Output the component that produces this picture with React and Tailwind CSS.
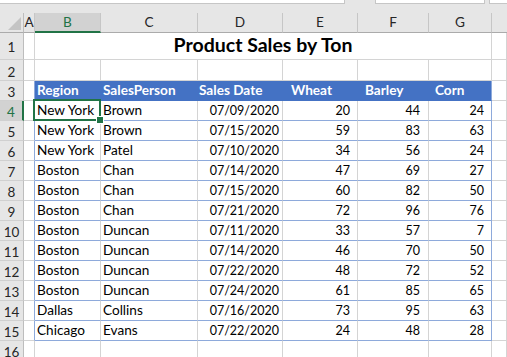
import React from "react";

const rows = [
  ["New York", "Brown", "07/09/2020", 20, 44, 24],
  ["New York", "Brown", "07/15/2020", 59, 83, 63],
  ["New York", "Patel", "07/10/2020", 34, 56, 24],
  ["Boston", "Chan", "07/14/2020", 47, 69, 27],
  ["Boston", "Chan", "07/15/2020", 60, 82, 50],
  ["Boston", "Chan", "07/21/2020", 72, 96, 76],
  ["Boston", "Duncan", "07/11/2020", 33, 57, 7],
  ["Boston", "Duncan", "07/14/2020", 46, 70, 50],
  ["Boston", "Duncan", "07/22/2020", 48, 72, 52],
  ["Boston", "Duncan", "07/24/2020", 61, 85, 65],
  ["Dallas", "Collins", "07/16/2020", 73, 95, 63],
  ["Chicago", "Evans", "07/22/2020", 24, 48, 28],
];

const base = "box-border border-r border-b whitespace-nowrap overflow-hidden flex items-end";
const rowHdr = "box-border border-r border-b border-r-[#bdbdbd] border-b-[#d0d0d0] bg-[#e6e6e6] flex items-end justify-center text-[#262626] pb-[1px] text-[13.5px]";
const num = "text-[12.5px] pb-[3px]";

function ColHeader({ children, selected }) {
  if (selected) {
    return (
      <div className="box-border h-[20px] border-r border-r-[#c6c6c6] border-b-2 border-b-[#217346] bg-[#d2d2d2] flex items-center justify-center text-[#217346] pt-[1px]">
        {children}
      </div>
    );
  }
  return (
    <div className="box-border h-[20px] border-r border-b border-r-[#c6c6c6] border-b-[#ababab] bg-[#e6e6e6] flex items-center justify-center text-[#262626]">
      {children}
    </div>
  );
}

export default function App() {
  return (
    <div className="w-[507px] h-[357px] overflow-hidden bg-white font-['Lato','Noto_Sans',sans-serif] text-[13.6px] leading-none text-black">
      {/* top strip */}
      <div className="h-[4px] flex bg-[#e6e6e6]">
        <div className="w-[345px] bg-white border-r border-b border-[#c6c6c6]" />
        <div className="w-[30px]" />
        <div className="w-[110px] bg-white border-l border-r border-b border-[#c6c6c6]" />
        <div className="w-[4px]" />
        <div className="flex-1 bg-white border-l border-b border-[#c6c6c6]" />
      </div>
      <div className="h-[9px] bg-[#e6e6e6]" />

      <div className="grid grid-cols-[24px_11px_66px_97px_85px_75px_71px_63px_1fr]">
        {/* column header row */}
        <div className="box-border h-[20px] border-r border-b border-r-[#bdbdbd] border-b-[#ababab] bg-[#e6e6e6] flex items-end justify-end pr-[2px] pb-[2px]">
          <svg width="13" height="13" viewBox="0 0 13 13">
            <polygon points="13,0 13,13 0,13" fill="#c4c4c4" />
          </svg>
        </div>
        <ColHeader>A</ColHeader>
        <ColHeader selected>B</ColHeader>
        <ColHeader>C</ColHeader>
        <ColHeader>D</ColHeader>
        <ColHeader>E</ColHeader>
        <ColHeader>F</ColHeader>
        <ColHeader>G</ColHeader>
        <div className="box-border h-[20px] border-b border-b-[#ababab] bg-[#e6e6e6]" />

        {/* row 1 */}
        <div className={`${rowHdr} h-[27px] pb-[5px]`}>1</div>
        <div className={`${base} h-[27px] border-[#d4d4d4]`} />
        <div className={`${base} col-span-6 h-[27px] border-[#d4d4d4] justify-center pb-[5px] font-bold text-[19.5px]`}>
          Product Sales by Ton
        </div>
        <div className={`${base} h-[27px] border-[#d4d4d4]`} />

        {/* row 2 */}
        <div className={`${rowHdr} h-[21px]`}>2</div>
        {Array.from({ length: 8 }).map((_, i) => (
          <div key={i} className={`${base} h-[21px] border-[#d4d4d4]`} />
        ))}

        {/* row 3 header */}
        <div className={`${rowHdr} h-[20px]`}>3</div>
        <div className={`${base} h-[20px] border-r-[#8eaadb] border-b-[#d4d4d4]`} />
        <div className={`${base} h-[20px] bg-[#4472c4] border-[#4472c4] text-white font-bold pl-[2px] pb-[2px]`}>Region</div>
        <div className={`${base} h-[20px] bg-[#4472c4] border-[#4472c4] text-white font-bold pl-[2px] pb-[2px]`}>SalesPerson</div>
        <div className={`${base} h-[20px] bg-[#4472c4] border-[#4472c4] text-white font-bold pl-[1px] pb-[2px]`}>Sales Date</div>
        <div className={`${base} h-[20px] bg-[#4472c4] border-[#4472c4] text-white font-bold pl-[8px] pb-[2px]`}>Wheat</div>
        <div className={`${base} h-[20px] bg-[#4472c4] border-[#4472c4] text-white font-bold pl-[7px] pb-[2px]`}>Barley</div>
        <div className={`${base} h-[20px] bg-[#4472c4] border-b-[#4472c4] border-r-[#8eaadb] text-white font-bold pl-[6px] pb-[2px]`}>Corn</div>
        <div className={`${base} h-[20px] border-[#d4d4d4]`} />

        {/* data rows */}
        {rows.map((r, idx) => {
          const n = idx + 4;
          const sel = n === 4;
          return (
            <React.Fragment key={n}>
              {sel ? (
                <div className="box-border h-[20px] border-r-2 border-b border-r-[#217346] border-b-[#d0d0d0] bg-[#d2d2d2] flex items-end justify-center text-[#217346] pb-[1px] text-[13.5px]">
                  {n}
                </div>
              ) : (
                <div className={`${rowHdr} h-[20px]`}>{n}</div>
              )}
              <div className={`${base} h-[20px] border-r-[#8eaadb] border-b-[#d4d4d4]`} />
              <div className={`${base} h-[20px] border-r-[#d4d4d4] border-b-[#8eaadb] pl-[2px] pb-[2px] ${sel ? "relative overflow-visible" : ""}`}>
                {r[0]}
                {sel && (
                  <>
                    <div className="absolute left-[-2px] top-[-2px] right-[-1px] bottom-[-1px] border-2 border-[#217346]" />
                    <div className="absolute right-[-3px] bottom-[-3px] w-[6px] h-[6px] bg-[#217346] outline outline-1 outline-white" />
                  </>
                )}
              </div>
              <div className={`${base} h-[20px] border-r-[#d4d4d4] border-b-[#8eaadb] pl-[2px] pb-[2px]`}>{r[1]}</div>
              <div className={`${base} h-[20px] border-r-[#d4d4d4] border-b-[#8eaadb] justify-end pr-[3px] ${num}`}>{r[2]}</div>
              <div className={`${base} h-[20px] border-r-[#d4d4d4] border-b-[#8eaadb] justify-end pr-[7px] ${num}`}>{r[3]}</div>
              <div className={`${base} h-[20px] border-r-[#d4d4d4] border-b-[#8eaadb] justify-end pr-[8px] ${num}`}>{r[4]}</div>
              <div className={`${base} h-[20px] border-r-[#8eaadb] border-b-[#8eaadb] justify-end pr-[7px] ${num}`}>{r[5]}</div>
              <div className={`${base} h-[20px] border-[#d4d4d4]`} />
            </React.Fragment>
          );
        })}

        {/* row 16 */}
        <div className={`${rowHdr} h-[20px]`}>16</div>
        {Array.from({ length: 8 }).map((_, i) => (
          <div key={i} className={`${base} h-[20px] border-[#d4d4d4]`} />
        ))}
      </div>
    </div>
  );
}
